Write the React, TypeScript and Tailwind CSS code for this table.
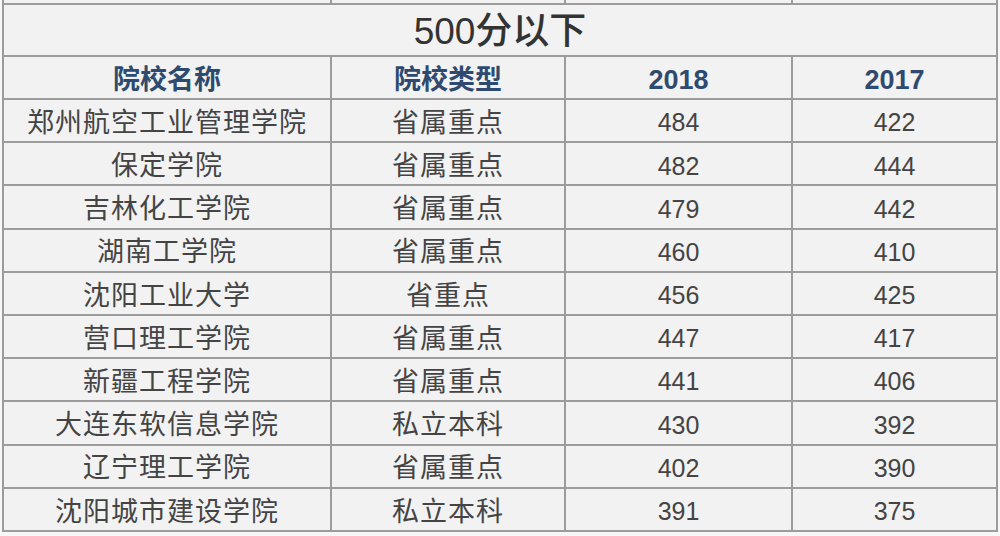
import React from 'react';

const rows: [string, string, string, string][] = [
  ['郑州航空工业管理学院', '省属重点', '484', '422'],
  ['保定学院', '省属重点', '482', '444'],
  ['吉林化工学院', '省属重点', '479', '442'],
  ['湖南工学院', '省属重点', '460', '410'],
  ['沈阳工业大学', '省重点', '456', '425'],
  ['营口理工学院', '省属重点', '447', '417'],
  ['新疆工程学院', '省属重点', '441', '406'],
  ['大连东软信息学院', '私立本科', '430', '392'],
  ['辽宁理工学院', '省属重点', '402', '390'],
  ['沈阳城市建设学院', '私立本科', '391', '375'],
];

const widths = ['w-[328px]', 'w-[234px]', 'w-[227px]', 'w-[205px]'];

const App: React.FC = () => {
  return (
    <div
      className="w-[1000px] h-[536px] bg-[#f7f7f7] pl-[2px] overflow-hidden"
      style={{ fontFamily: '"Liberation Sans", "Noto Sans CJK SC", sans-serif' }}
    >
      <div className="w-[996px] bg-[#f2f2f2] border-l-2 border-[#9c9c9c]">
        {/* 上一表格的尾部 */}
        <div className="flex h-[5px] border-b-2 border-[#9c9c9c]">
          {widths.map((w, i) => (
            <div key={i} className={`${w} border-r-2 border-[#9c9c9c]`} />
          ))}
        </div>

        {/* 标题 */}
        <div className="flex items-center justify-center h-[52px] pt-[3px] border-b-2 border-r-2 border-[#9c9c9c] text-[37px] font-medium text-[#333] leading-none">
          500分以下
        </div>

        {/* 表头 */}
        <div className="flex h-[43px] border-b-2 border-[#9c9c9c] text-[27px] font-bold text-[#2f4a6f]">
          {['院校名称', '院校类型', '2018', '2017'].map((t, i) => (
            <div
              key={t}
              className={`${widths[i]} flex items-center justify-center pt-[5px] border-r-2 border-[#9c9c9c]`}
            >
              {t}
            </div>
          ))}
        </div>

        {/* 数据 */}
        {rows.map((r) => (
          <div key={r[0]} className="flex h-[43.2px] border-b-2 border-[#9c9c9c] text-[#444]">
            {r.map((t, i) => (
              <div
                key={i}
                className={`${widths[i]} flex items-center justify-center pt-[5px] border-r-2 border-[#9c9c9c] ${
                  i >= 2 ? 'text-[25px]' : 'text-[27px] tracking-[1px]'
                }`}
              >
                {t}
              </div>
            ))}
          </div>
        ))}
      </div>
    </div>
  );
};

export default App;
